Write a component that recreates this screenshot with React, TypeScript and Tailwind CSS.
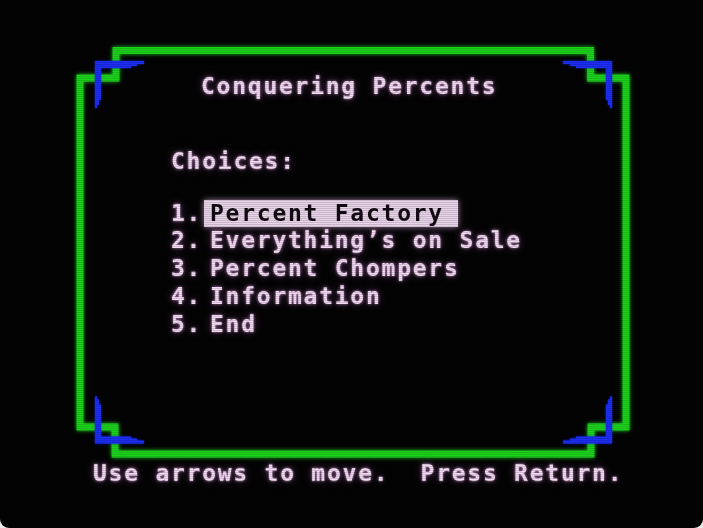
import type { ReactNode } from 'react';

const menuItems = [
  'Percent Factory',
  'Everything\u2019s on Sale',
  'Percent Chompers',
  'Information',
  'End',
];

const selectedIndex = 0;

// Stepped green border with notched corners, plus the blue corner brackets.
function ScreenFrame() {
  const bracket =
    '95,61 144,61 144,64 137,64 137,66 131,66 131,68 101,68 101,100 99,100 99,105 97,105 97,108 95,108';

  return (
    <svg
      className="absolute inset-0 h-full w-full"
      viewBox="0 0 703 528"
      aria-hidden="true"
    >
      <defs>
        <filter id="greenGlow" x="-10%" y="-10%" width="120%" height="120%">
          <feGaussianBlur stdDeviation="2.2" result="blur" />
          <feMerge>
            <feMergeNode in="blur" />
            <feMergeNode in="SourceGraphic" />
          </feMerge>
        </filter>
        <filter id="blueGlow" x="-20%" y="-20%" width="140%" height="140%">
          <feGaussianBlur stdDeviation="1.2" result="blur" />
          <feMerge>
            <feMergeNode in="blur" />
            <feMergeNode in="SourceGraphic" />
          </feMerge>
        </filter>
      </defs>

      <polygon
        points="116,50.5 590.5,50.5 590.5,78 626,78 626,427 591,427 591,454 115,454 115,427 80,427 80,78 116,78"
        fill="none"
        stroke="#1fd41f"
        strokeWidth="6.8"
        strokeLinejoin="miter"
        filter="url(#greenGlow)"
      />

      <g fill="#1c2ef4" filter="url(#blueGlow)">
        <polygon points={bracket} />
        <g transform="translate(707 0) scale(-1 1)">
          <polygon points={bracket} />
        </g>
        <g transform="translate(0 504.5) scale(1 -1)">
          <polygon points={bracket} />
        </g>
        <g transform="translate(707 504.5) scale(-1 -1)">
          <polygon points={bracket} />
        </g>
      </g>
    </svg>
  );
}

function Line({ className = '', children }: { className?: string; children: ReactNode }) {
  return <div className={`h-[27.75px] whitespace-pre leading-[27.75px] ${className}`}>{children}</div>;
}

export default function App() {
  return (
    <div className="h-[528px] w-[703px] bg-[#ececec]">
      <div className="relative h-[528px] w-[703px] overflow-hidden rounded-b-[9px] bg-[#030303]">
        <ScreenFrame />

        <div className="relative flex flex-col pt-[72.6px] font-['DejaVu_Sans_Mono',monospace] text-[23px] font-bold tracking-[1.75px] text-[#f3dcf3] [text-shadow:0_0_3px_rgba(255,190,255,0.75),0_0_9px_rgba(190,110,200,0.45)]">
          <Line className="pl-[201px]">Conquering Percents</Line>

          <Line className="mt-[47.25px] pl-[171px]">Choices:</Line>

          <div className="mt-[24.25px] flex flex-col pl-[171px]">
            {menuItems.map((item, i) => (
              <Line key={item} className="flex">
                <span className="w-[39px]">{i + 1}.</span>
                {i === selectedIndex ? (
                  <span className="-ml-[6px] bg-[#e9d5e9] pl-[6px] pr-[14px] text-[#140a14] [text-shadow:none] shadow-[0_0_6px_rgba(240,190,240,0.7)]">
                    {item}
                  </span>
                ) : (
                  <span>{item}</span>
                )}
              </Line>
            ))}
          </div>

          <Line className="mt-[121.25px] pl-[93px]">Use arrows to move.  Press Return.</Line>
        </div>

        {/* faint scanlines across the tube */}
        <div className="pointer-events-none absolute inset-0 bg-[repeating-linear-gradient(to_bottom,rgba(0,0,0,0.14)_0px,rgba(0,0,0,0.14)_1px,transparent_1px,transparent_2px)]" />
      </div>
    </div>
  );
}
